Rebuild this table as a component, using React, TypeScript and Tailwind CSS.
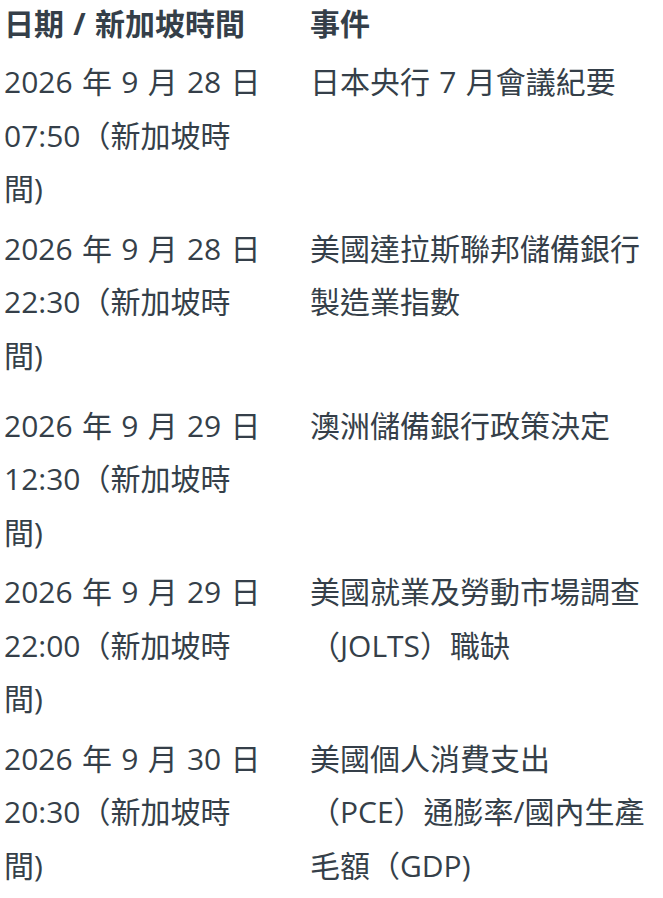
// Economic calendar table: date/time (Singapore) and event, two columns.

interface CalendarRow {
  date: string;
  event: string;
  extraGap?: boolean;
}

const ROWS: CalendarRow[] = [
  { date: "2026 年 9 月 28 日 07:50（新加坡時間)", event: "日本央行 7 月會議紀要" },
  {
    date: "2026 年 9 月 28 日 22:30（新加坡時間)",
    event: "美國達拉斯聯邦儲備銀行製造業指數",
    extraGap: true,
  },
  { date: "2026 年 9 月 29 日 12:30（新加坡時間)", event: "澳洲儲備銀行政策決定" },
  { date: "2026 年 9 月 29 日 22:00（新加坡時間)", event: "美國就業及勞動市場調查（JOLTS）職缺" },
  {
    date: "2026 年 9 月 30 日 20:30（新加坡時間)",
    event: "美國個人消費支出（PCE）通膨率/國內生產毛額（GDP)",
  },
];

export default function App() {
  return (
    <div className="min-h-screen bg-white pl-[4px] font-['Open_Sans','Noto_Sans_CJK_TC',sans-serif] text-[30px] text-[#353f49] [text-spacing-trim:space-all] [word-spacing:1.5px]">
      <div className="grid grid-cols-[262px_345px] gap-x-[44px] pb-[5px] font-bold leading-[47px]">
        <div>日期 / 新加坡時間</div>
        <div>事件</div>
      </div>

      {ROWS.map((r) => (
        <div
          key={r.date}
          className={
            r.extraGap
              ? "grid grid-cols-[262px_345px] gap-x-[44px] pt-[3px] pb-[13.5px] leading-[53.5px]"
              : "grid grid-cols-[262px_345px] gap-x-[44px] py-[3px] leading-[53.5px]"
          }
        >
          <div>{r.date}</div>
          <div>{r.event}</div>
        </div>
      ))}
    </div>
  );
}
